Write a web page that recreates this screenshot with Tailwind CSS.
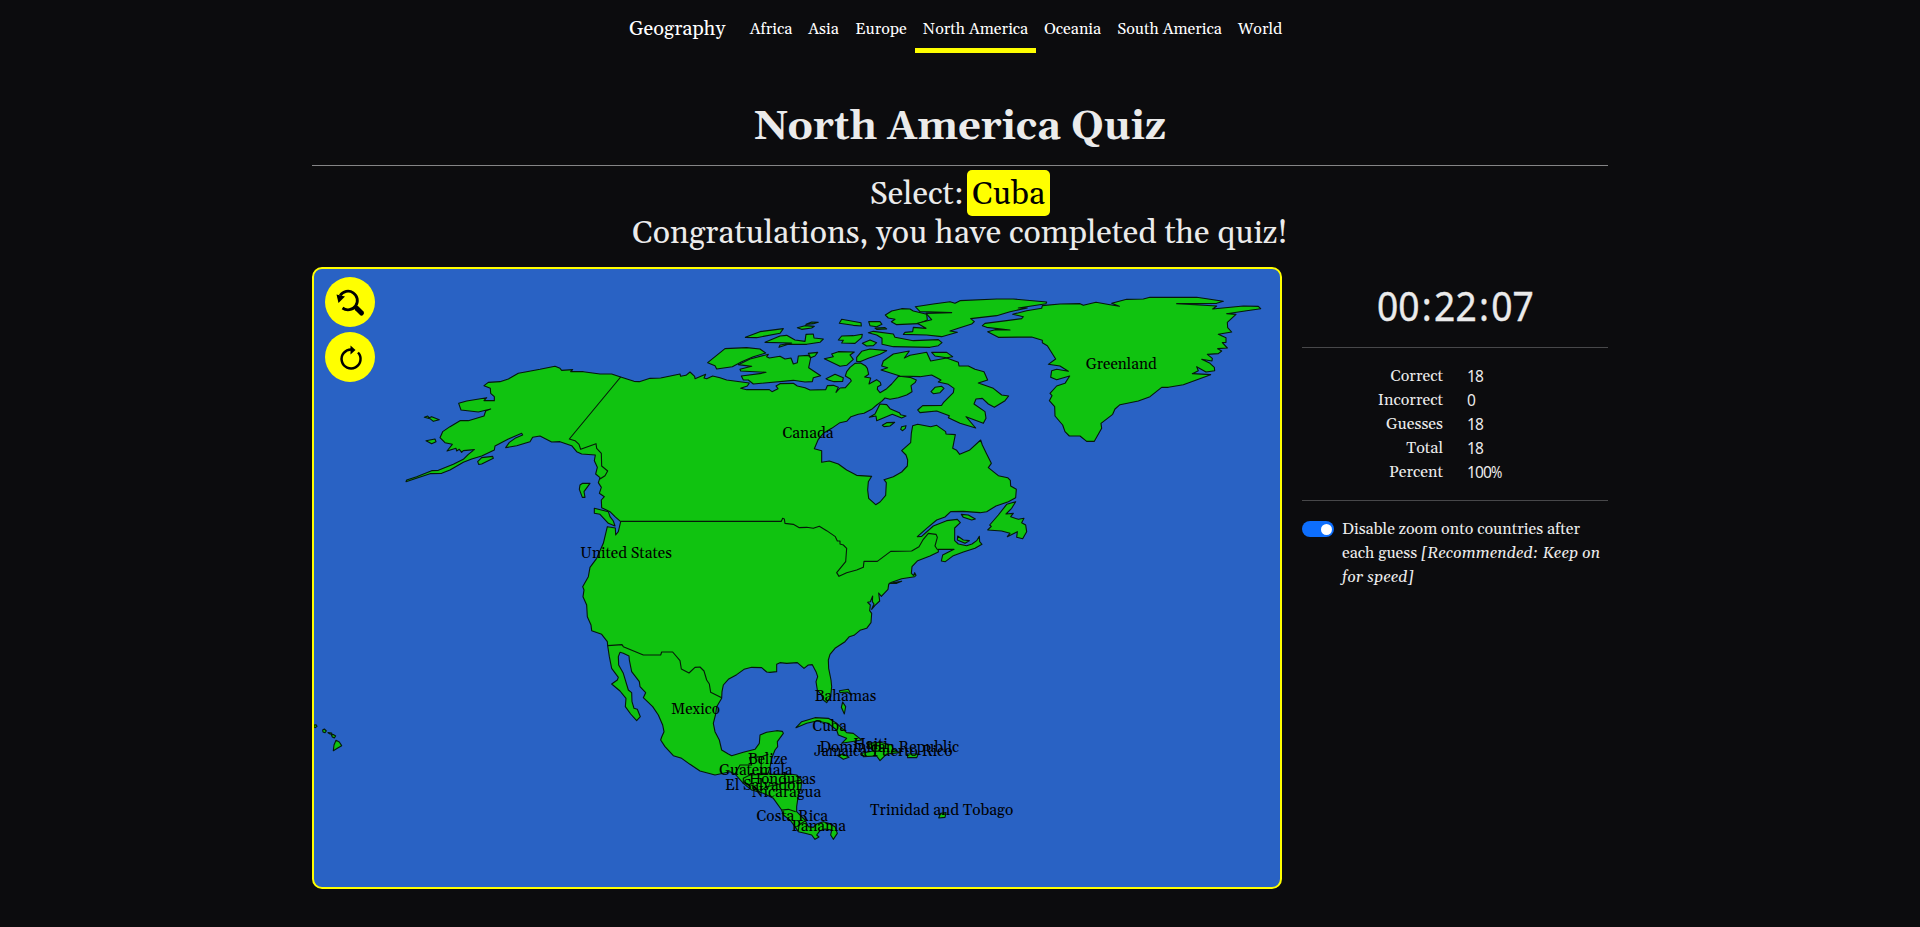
<!DOCTYPE html>
<html lang="en">
<head>
<meta charset="utf-8">
<title>North America Quiz</title>
<script src="https://cdn.jsdelivr.net/npm/@tailwindcss/browser@4"></script>
</head>
<body class="h-[927px] overflow-hidden bg-[#0c0c0e] font-[Gelasio,Georgia,'Liberation_Serif',serif] text-base text-[#ebebeb]">
<header class="flex h-[57px] pl-[629px] text-white">
  <a class="mr-4 w-[97px] shrink-0 whitespace-nowrap pt-[14px] text-xl leading-[30px]">Geography</a>
  <nav class="flex h-[53px] whitespace-nowrap text-center leading-6">
    <a class="w-[58px] pt-[17px]">Africa</a>
    <a class="w-[47px] pt-[17px]">Asia</a>
    <a class="w-[68px] pt-[17px]">Europe</a>
    <a class="w-[121px] border-b-5 border-[#ff0] pt-[17px]">North America</a>
    <a class="w-[73px] pt-[17px]">Oceania</a>
    <a class="w-[121px] pt-[17px]">South America</a>
    <a class="w-[60px] pt-[17px]">World</a>
  </nav>
</header>
<main class="mx-auto w-[1296px]">
  <h1 class="h-[108px] pt-[47px] text-center text-[40px] font-bold leading-[48px]">North America Quiz</h1>
  <hr class="border-t border-[#858586]">
  <div class="mb-[15px] h-[86px] pt-[9px] text-center text-[32px] leading-[39px]">
    <p>Select: <span class="-ml-1 rounded-[5px] bg-[#ff0] px-[5px] pt-[4px] pb-[1px] text-black">Cuba</span></p>
    <p>Congratulations, you have completed the quiz!</p>
  </div>
  <div class="flex gap-5">
    <section class="relative h-[622px] w-[970px] shrink-0 overflow-hidden rounded-[10px] border-2 border-[#ff0] bg-[#2962c4]">
      <svg class="block h-[618px] w-[966px]" viewBox="314 269 966 618">
        <g id="land" fill="#10c310" stroke="#06180a" stroke-width="1.1" stroke-linejoin="round"></g>
        <g id="borders" fill="none" stroke="#06180a" stroke-width="1.1" stroke-linejoin="round"></g>
        <g id="names" fill="#000" font-size="15.5"></g>
      </svg>
      <div class="absolute left-[11px] top-2 flex flex-col gap-[5px]">
        <button class="size-[50px] rounded-full bg-[#ff0]" aria-label="Reset zoom">
          <svg class="size-[50px]" viewBox="0 0 50 50" fill="none" stroke="#000">
            <path d="M15.2 18.5A9.3 9.3 0 1 1 17.5 31" stroke-width="2.8"/>
            <path d="M30.5 30.5l2.5 2.5" stroke-width="3.500"/>
            <path d="M32 31.5l4.500 4.500" stroke-width="5" stroke-linecap="round"/>
            <path d="M11.500 17.500l8.500 2-6.500 6.500z" fill="#000" stroke="none"/>
          </svg>
        </button>
        <button class="size-[50px] rounded-full bg-[#ff0]" aria-label="Restart">
          <svg class="size-[50px]" viewBox="0 0 50 50" fill="none" stroke="#000">
            <path d="M33 20.500A9.500 9.500 0 1 1 26.500 17.500" stroke-width="2.500"/>
            <path d="M25.500 13.500v9l5-4.500z" fill="#000" stroke="none"/>
          </svg>
        </button>
      </div>
    </section>
    <aside class="w-[306px]">
      <div class="h-[81px] whitespace-nowrap border-b border-[#48484a] pt-[15px] text-center font-['Noto_Sans',sans-serif] text-[40px] leading-[48px]"><span class="inline-block origin-center scale-x-[.93] [-webkit-text-stroke:.4px_#ebebeb]">00<span class="px-[2.5px]">:</span>22<span class="px-[2.5px]">:</span>07</span></div>
      <dl class="grid h-[153px] grid-cols-[141px_1fr] content-start gap-x-6 border-b border-[#48484a] pt-4 leading-6">
        <dt class="text-right">Correct</dt><dd class="font-['Noto_Sans',sans-serif] text-[15.500px] tracking-[-.9px]">18</dd>
        <dt class="text-right">Incorrect</dt><dd class="font-['Noto_Sans',sans-serif] text-[15.500px] tracking-[-.9px]">0</dd>
        <dt class="text-right">Guesses</dt><dd class="font-['Noto_Sans',sans-serif] text-[15.500px] tracking-[-.9px]">18</dd>
        <dt class="text-right">Total</dt><dd class="font-['Noto_Sans',sans-serif] text-[15.500px] tracking-[-.9px]">18</dd>
        <dt class="text-right">Percent</dt><dd class="font-['Noto_Sans',sans-serif] text-[15.500px] tracking-[-.9px]">100<span class="inline-block origin-left scale-x-[.88]">%</span></dd>
      </dl>
      <label class="flex gap-2 pt-4 leading-6">
        <span class="mt-1 flex h-4 w-8 shrink-0 items-center justify-end rounded-full bg-[#0d6efd] pr-[2px]"><span class="size-[11px] rounded-full bg-white"></span></span>
        <span class="whitespace-nowrap">Disable zoom onto countries after<br>each guess <i>[Recommended: Keep on<br>for speed]</i></span>
      </label>
    </aside>
  </div>
</main>
<script>
// Outlines are kept per map tile, in thirds of a pixel from the tile's origin.
const T = {B:[300,255],C:[560,340],D:[680,280],E:[960,280],F:[560,490],G:[820,420],H:[700,680],I:[300,680],L:[650,715]};
function trace(s) {
  let o = T.B;
  return s.trim().split(/\s+/).map(w => {
    if (T[w]) { o = T[w]; return ''; }
    const [x, y] = w.split(',').map(Number);
    return (o[0] + x / 3).toFixed(2) + ',' + (o[1] + y / 3).toFixed(2);
  }).join(' ');
}
const land = [
`C 182,111 222,124 238,125 270,115 302,114 360,102 362,109 378,106 390,96 404,109 405,116 437,103 432,114 440,116 458,108 480,113 500,120 568,129 562,138 542,145 560,149 628,149 636,155 654,146 648,138 660,131 700,130 712,138 735,143 750,150 797,149 802,137 820,136 835,142 828,157 840,144 856,143
D 514,303 511,297 496,288 500,275 510,262 525,250 542,249 556,257 562,265 566,283 554,291 572,294 567,312 590,299 601,307 603,315 593,320 592,328 600,338 620,326 635,312 655,289 665,289 690,292 709,300 705,308 693,317 696,335 680,345 655,353 630,358 615,354 605,364 590,375 575,388 552,400 535,403 513,410 500,424 480,428 455,445 430,460 415,478 403,506 425,512 425,547 448,543 475,552 500,570 530,586 575,589 565,605 563,630 566,655 587,674 600,666 617,646 619,608 612,599 640,590 665,576 682,558 683,540 678,525 665,512 692,488 694,460 698,437 713,433 752,440 770,436 797,455 798,462 826,464 818,505 830,511 839,523 868,511 902,480 907,495 920,522 934,550 925,563 955,587 983,593 991,601 992,618 1009,628 1007,653 985,665 948,678
G 500,275 480,278 430,274 392,275 375,291 350,300 320,325 292,350 305,349 340,318 380,302 412,298 421,308 404,324 404,362 415,372 440,377 456,372 470,362 478,349 479,365 486,373 465,385 430,396 400,407 376,425 364,423 368,405 402,388 355,388 355,396 330,408 293,422 276,440 274,460 281,467 284,458 288,466 284,470 245,476 215,487 206,493 204,508 184,529 176,519 179,543 165,556 155,568 162,552 157,545 158,528 151,545 143,547 151,555 149,572 155,580 153,608 140,625 120,631 102,646 88,650 75,665 45,685 30,703 25,720 26,745 33,780
F 815,590 812,620 800,638 790,630 785,615 772,600 768,575 773,560 768,545 757,524 745,525 732,535 712,518 680,520 660,518 650,523 650,545 630,547 620,546 605,533 575,532 552,538 530,554 505,568 490,585 486,605 485,625 470,650 467,672 460,700
H 40,130 45,155 58,180 65,210 85,222 95,227 130,217 165,208 178,190 180,165 200,157 230,152 247,154 250,160 232,185 233,200 225,210 215,235 210,262 205,278 215,283 270,282 290,285 305,300 303,325 295,345 290,380 290,395 315,420 325,440 340,442 350,432 370,425 385,430 405,440 412,460 400,478 392,465 395,450 375,447 360,452 350,465 357,471 345,478 335,465 315,460 295,455 285,440
L 420,315 400,300 395,285 370,250 340,235 305,225 280,205 255,177 240,170 220,175 195,180 150,168 120,148 95,130 70,122 45,95 32,75 35,66 42,50 38,30 25,0
F 278,650 250,623 257,608 240,590 238,575 215,545 208,510 207,498 190,490 180,487 175,500 176,525 190,550 205,600 215,608 216,635 222,655 232,658 241,680 230,692 212,672 196,650 198,625 180,603 155,582 172,570 175,562 155,535 148,500 143,467 142,455 125,433 95,422 93,405 82,380 80,345 69,320 72,300 68,290 85,260 90,232 110,205 130,160 142,110 166,114 167,135 175,125 182,95
C 165,530 150,515 125,503 124,480 133,470 118,460 124,442 115,428 120,413 107,402 112,382 103,362 106,345 65,342 50,335 35,317 0,305
B 755,561 720,543 698,547 690,560 650,572 617,578 628,562 645,550 668,540 665,535 625,552 585,573 583,585 545,603 515,612 490,622 450,645 425,655 390,656 318,680 320,675 350,665 395,647 415,646 460,628 490,613 505,598 523,584 490,587 485,592 478,583 470,588 468,580 441,588 457,568 435,563 420,548 428,530 450,515 480,497 505,497 552,483 557,468 572,462 535,471 483,465 476,445 500,438 560,428 552,437 583,437 583,425 572,415 571,400 552,392 565,382 600,380 625,372 655,355 680,350 720,343 765,334 780,340 785,346 818,344 812,350 850,350 900,357 935,357 962,366`,
'D 83,248 135,206 200,203 240,207 257,219 220,230 185,245 157,260 110,267 105,257',
'D 175,254 210,237 265,223 260,230 268,234 300,229 315,237 333,234 340,252 352,248 355,228 385,226 392,234 386,263 422,287 400,293 397,305 375,306 340,301 220,312 205,300 190,300 184,288 245,280 258,277 182,273 180,268 215,259',
'D 385,220 413,217 405,228 392,233','D 196,172 240,155 310,146 300,160 230,173',
'D 255,187 300,168 320,166 345,180 375,184 378,163 400,162 402,174 430,177 420,187 380,193 325,193 297,202 300,195 335,189',
'D 352,143 375,137 403,139 395,144 365,148','D 378,133 395,126 415,127 400,131','D 478,130 485,118 543,128 544,138 520,136',
'D 475,180 485,168 520,167 547,163 545,173 525,190 485,189 490,181','D 566,125 600,125 606,133 590,140 570,137','D 585,144 615,143 620,147 590,148',
'D 547,190 570,180 590,188 580,197 560,198','D 565,158 580,154 640,162 645,172 700,182 775,179 786,188 775,197 750,202 640,200 606,193 606,175 590,165',
'D 433,236 460,230 455,222 475,215 523,216 510,225 520,238 500,256 480,259 455,247','D 530,232 545,214 570,207 620,212 600,223 565,235 540,245 530,244',
'D 438,296 465,283 490,293 488,304 462,305 445,300','D 616,105 635,93 665,86 690,87 700,93 740,103 742,120 715,131 650,134 634,125 645,118 625,114',
'D 706,80 760,72 810,65 825,70 840,62 950,57 1000,57 1100,66 1098,71 1015,84 1042,84 990,95 950,107 872,116 883,125 875,132 835,145 810,153 832,157 785,170 740,165 670,163 675,157 698,155 700,142 738,145 712,130 755,119 738,100 815,98 720,95',
'D 603,270 623,263 605,258 610,243 640,222 688,213 673,234 690,226 740,217 752,243 800,234 835,247 837,258 865,258 885,268 912,275 923,300 895,309 940,325 965,345 986,348 975,362 943,382 925,372 907,355 888,357 882,372 915,395 918,415 910,430 858,410 887,444 840,430 805,413 808,407 770,393 720,398 713,390 728,377 785,376 790,368 820,338 822,325 805,313 775,306 783,300 755,285 720,290 660,288',
'D 755,217 800,217 818,230 800,233 765,228','D 753,335 765,322 785,319 792,325 780,338 760,341',
'D 568,412 585,402 600,372 620,374 630,386 658,398 662,404 678,408 665,414 637,403 590,422 588,408','D 607,436 620,428 644,427 630,438 612,440','D 662,448 665,440 678,437 676,445 668,452',
'E 67,137 75,130 140,122 185,116 190,110 158,103 200,92 245,85 247,77 300,72 360,71 370,76 408,67 450,74 478,79 455,70 500,58 550,57 570,52 710,52 790,64 770,70 650,71 770,78 758,87 850,78 895,79 902,86 860,92 800,101 828,103 802,127 803,143 815,156 775,163 798,173 798,187 787,188 802,204 773,206 785,213 775,221 742,223 757,235 756,243 725,238 750,250 763,262 764,272 738,276 710,260 715,272 697,281 752,284 670,314 625,322 605,322 570,350 535,363 480,374 465,387 458,403 423,430 425,445 403,484 380,484 360,468 328,468 315,455 308,435 285,408 284,380 268,362 276,347 270,340 290,318 315,310 329,288 290,299 272,292 275,272 290,268 325,274 300,258 265,253 287,237 262,197 247,188 247,181 215,171 115,172 83,155 105,149 150,150 80,142',
'C 103,505 145,515 150,530 160,543 165,558 145,550 120,523 103,520','C 60,435 68,430 90,430 72,455 75,472 67,472 58,448',
'B 533,620 545,608 578,604 580,610 545,627 536,628','B 378,557 405,552 408,560 395,566','B 373,487 383,483 387,488 395,485 418,494 400,499 390,491',
'G 503,330 514,319 509,315 535,285 560,253 587,245 575,265 558,282 580,280 572,290 595,298 612,295 605,308 617,315 620,335 608,356 590,352 592,335 562,350 570,340 545,333',
'G 413,348 430,360 448,362 435,370 412,360','G 424,283 445,285 466,297 455,300 430,292','G 208,490 245,484 230,490',
'H 418,32 445,28 454,45 442,36 420,38','H 428,66 437,80 433,102 424,82',
'H 288,143 305,125 345,113 385,115 410,130 440,158 460,160 485,180 425,190 440,175 415,165 410,150 385,130 350,123 320,130',
'H 485,220 520,213 512,205 500,190 540,187 575,195 580,208 600,218 560,222 540,242 530,228 490,230','H 412,226 430,222 447,232 430,238','H 622,222 655,222 650,233 623,233','H 716,414 722,400 738,398 735,412',
'I 42,135 48,134 51,139 46,143 42,141','I 68,150 73,147 79,153 75,158 69,156','I 84,158 95,159 96,163 90,162','I 94,164 101,164 107,168 103,174 97,171','I 100,212 102,195 108,181 118,186 125,197 112,205'
];
const borders = [
'B 962,366 808,552 825,557 837,568 842,583 888,566 890,580 904,595 905,633 923,648 915,662 900,672',
'C 182,544 664,544 668,535 673,537 675,550 700,553 718,563 740,562 760,565 778,559 800,572 826,590 832,603 840,603 840,612 850,615 860,625 857,665 830,698 837,709 860,698 890,690 910,682 912,664 952,664 G 212,394 275,393 297,380 310,358 325,340 348,343 352,352 345,378 353,390',
'F 143,467 186,464 190,470 250,495 302,495 305,486 338,486 360,512 364,537 387,549 405,532 420,531 432,543 440,570 448,582 452,607 485,623',
'L 255,177 270,150 305,150 298,128 335,125 355,118','L 335,125 332,175 355,175','L 355,178 300,180 280,190 280,207','L 282,203 310,212 328,230 350,215 400,205 455,195','L 395,285 415,283 437,290','L 465,318 447,330 445,348','H 530,190 525,228'
];
const names = [['Greenland',1085.7,369.3,71],['Canada',782.5,438,51],['United States',580.3,558,91.5],['Mexico',671,714,49],['Bahamas',814.7,701.3,61.5],['Cuba',812.5,731,34.3],['Haiti',853.3,749,34.5],['Dominican Republic',819.5,752.3,139.5],['Jamaica',814,756.3,53],['Puerto Rico',872,756,80.5],['Belize',748,764,39.5],['Guatemala',719,774.7,73.5],['Honduras',749,784.3,66.7],['El Salvador',725,790.3,76.7],['Nicaragua',751.7,797.3,69.5],['Costa Rica',756.5,821.3,71.5],['Panama',791.5,831,54.5],['Trinidad and Tobago',870,815,143.3]];
document.getElementById('land').innerHTML = land.map(s => `<polygon points="${trace(s)}"/>`).join('');
document.getElementById('borders').innerHTML = borders.map(s => `<polyline points="${trace(s)}"/>`).join('');
document.getElementById('names').innerHTML = names.map(([n, x, y, w]) => `<text x="${x}" y="${y}" textLength="${w}" lengthAdjust="spacingAndGlyphs">${n}</text>`).join('');
</script>
</body>
</html>
